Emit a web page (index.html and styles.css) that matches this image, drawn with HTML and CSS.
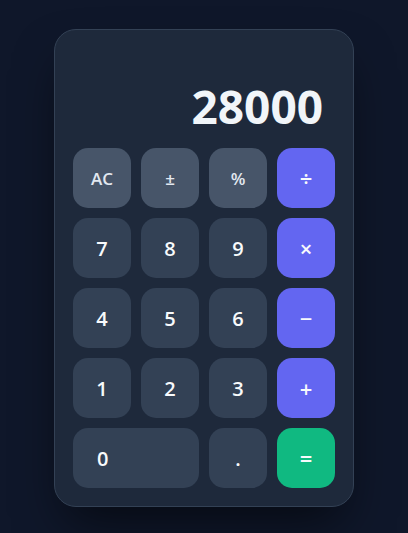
FILE: index.html
```html
<!DOCTYPE html>
<html>
<head>
 <meta charset="utf-8"/>
 <title>Calculator</title>
 <link rel="stylesheet" href="styles.css">
</head>
<body>

<div class="calc">
 <div class="display">28000</div>
 <div class="keys">
  <button class="key fn small">AC</button>
  <button class="key fn small">±</button>
  <button class="key fn small">%</button>
  <button class="key op">÷</button>

  <button class="key">7</button>
  <button class="key">8</button>
  <button class="key">9</button>
  <button class="key op">×</button>

  <button class="key">4</button>
  <button class="key">5</button>
  <button class="key">6</button>
  <button class="key op">−</button>

  <button class="key">1</button>
  <button class="key">2</button>
  <button class="key">3</button>
  <button class="key op">+</button>

  <button class="key zero">0</button>
  <button class="key">.</button>
  <button class="key eq">=</button>
 </div>
</div>

</body>
</html>
```

FILE: styles.css
```css
html, body {
 margin: 0;
 height: 100%;
}
body {
 font-family: "Open Sans", "Noto Sans", sans-serif;
 background: #0f172a;
 box-sizing: border-box;
 padding-top: 3px;
 display: flex;
 align-items: center;
 justify-content: center;
}
.calc {
 width: 262px;
 padding: 18px;
 background: #1e293b;
 border: 1px solid #334155;
 border-radius: 22px;
 box-shadow: 0 25px 50px -12px rgba(0, 0, 0, 0.6);
}
.display {
 height: 88px;
 margin-bottom: 12px;
 padding-right: 12px;
 padding-bottom: 7px;
 box-sizing: border-box;
 display: flex;
 align-items: flex-end;
 justify-content: flex-end;
 color: #f1f5f9;
 font-size: 46px;
 font-weight: 700;
 line-height: 1;
}
.keys {
 display: grid;
 grid-template-columns: repeat(4, 58px);
 grid-auto-rows: 60px;
 gap: 10px;
}
.key {
 border: 0;
 border-radius: 15px;
 background: #334155;
 color: #f8fafc;
 font-family: inherit;
 font-size: 20px;
 font-weight: 600;
 padding: 0;
}
.fn {
 background: #475569;
 color: #e2e8f0;
}
.small { font-size: 17px; }
.op {
 background: #6366f1;
 font-size: 22px;
}
.eq {
 background: #10b981;
 font-size: 22px;
}
.zero {
 grid-column: span 2;
 text-align: left;
 padding-left: 24px;
}
```
